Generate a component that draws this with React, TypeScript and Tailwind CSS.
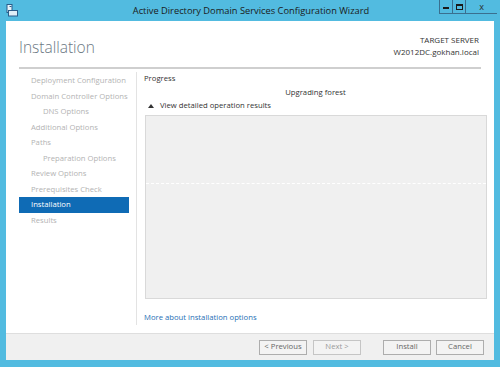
import React from 'react';

const navItems = [
  { label: 'Deployment Configuration', indent: false },
  { label: 'Domain Controller Options', indent: false },
  { label: 'DNS Options', indent: true },
  { label: 'Additional Options', indent: false },
  { label: 'Paths', indent: false },
  { label: 'Preparation Options', indent: true },
  { label: 'Review Options', indent: false },
  { label: 'Prerequisites Check', indent: false },
  { label: 'Installation', indent: false, active: true },
  { label: 'Results', indent: false },
];

export default function App() {
  return (
    <div
      className="w-[500px] h-[367px] bg-[#52bbe0] flex flex-col overflow-hidden"
      style={{ fontFamily: '"Open Sans", "Noto Sans", sans-serif' }}
    >
      {/* Title bar */}
      <div className="relative h-[21px] flex items-center shrink-0">
        <div className="absolute left-[6px] top-[4px]">
          <svg width="13" height="13" viewBox="0 0 13 13">
            <rect x="1" y="0.5" width="5" height="8" fill="#e8f4fa" stroke="#2a5d8a" />
            <rect x="2.5" y="6.5" width="9" height="5.5" fill="#dfeef7" stroke="#2a5d8a" />
            <rect x="3.5" y="2" width="2" height="1" fill="#2a5d8a" />
          </svg>
        </div>
        <div className="flex-1 text-center text-[9.3px] text-[#1a1a1a] pl-[2px]">
          Active Directory Domain Services Configuration Wizard
        </div>
        <div className="absolute right-[3px] top-0 flex h-[14px] border-b border-l border-[#3a6f8f]">
          <div className="w-[13px] flex items-center justify-center border-r border-[#3a6f8f]">
            <div className="w-[6px] h-[2px] bg-[#1a1a1a] mt-[3px]" />
          </div>
          <div className="w-[13px] flex items-center justify-center border-r border-[#3a6f8f]">
            <div className="w-[7px] h-[6px] border border-[#1a1a1a] border-t-2" />
          </div>
          <div className="w-[31px] flex items-center justify-center text-[9px] text-[#2a2a2a] leading-none">
            x
          </div>
        </div>
      </div>

      {/* Body */}
      <div className="flex-1 mx-[6px] bg-white flex flex-col">
        {/* Header */}
        <div className="px-[13px] pt-[14px] flex justify-between items-start">
          <div className="text-[15.5px] font-light text-[#6b7883] mt-[1px]">Installation</div>
          <div className="text-right text-[8px] leading-[12px] text-[#333] mt-[-1px] mr-[2px]">
            <div>TARGET SERVER</div>
            <div>W2012DC.gokhan.local</div>
          </div>
        </div>
        <div className="mx-[13px] mt-[8px] h-[2px] bg-[#cfcfcf]" />

        <div className="flex flex-1 pt-[3px]">
          {/* Left nav */}
          <div className="w-[131px] shrink-0 pl-[13px] pt-[1px] border-r border-[#e3e3e3] mb-[8px]">
            {navItems.map((item) => (
              <div
                key={item.label}
                className={
                  'h-[15.5px] flex items-center text-[7.7px] whitespace-nowrap w-[110px] ' +
                  (item.active ? 'bg-[#0f6bb5] text-white' : 'text-[#b3b3b3]') +
                  (item.indent ? ' pl-[24px]' : ' pl-[12px]')
                }
              >
                {item.label}
              </div>
            ))}
          </div>

          {/* Content */}
          <div className="flex-1 pl-[7px] pr-[7px] flex flex-col">
            <div className="text-[7.7px] text-[#333] mt-[1px] leading-[11px]">Progress</div>
            <div className="text-[7.7px] text-[#333] text-center mt-[3px] leading-[11px]">Upgrading forest</div>
            <div className="flex items-center text-[7.7px] text-[#333] mt-[2px] ml-[4px] leading-[11px]">
              <svg width="6" height="4" viewBox="0 0 6 4" className="mr-[6px]">
                <path d="M0 4 L3 0 L6 4 Z" fill="#333" />
              </svg>
              View detailed operation results
            </div>
            <div className="mt-[4px] ml-[1px] h-[184px] bg-[#f0f0f0] border border-[#d9d9d9] flex flex-col">
              <div className="h-[67px]" />
              <div className="border-t border-dashed border-white" />
            </div>
            <div className="text-[7.7px] text-[#1f6fb5] mt-[13px]">More about installation options</div>
          </div>
        </div>

        {/* Footer */}
        <div className="h-[27px] bg-[#f0f0f0] border-t border-[#dedede] flex items-center justify-end pr-[10px] text-[7.7px] text-[#666]">
          <div className="w-[48px] h-[15px] border border-[#adadad] bg-[#f3f3f3] flex items-center justify-center">&lt; Previous</div>
          <div className="w-[48px] h-[15px] border border-[#c5c5c5] bg-[#f3f3f3] flex items-center justify-center ml-[6px] text-[#9a9a9a]">Next &gt;</div>
          <div className="w-[48px] h-[15px] border border-[#adadad] bg-[#f3f3f3] flex items-center justify-center ml-[22px]">Install</div>
          <div className="w-[48px] h-[15px] border border-[#adadad] bg-[#f3f3f3] flex items-center justify-center ml-[5px]">Cancel</div>
        </div>
      </div>
      <div className="h-[7px] shrink-0" />
    </div>
  );
}
